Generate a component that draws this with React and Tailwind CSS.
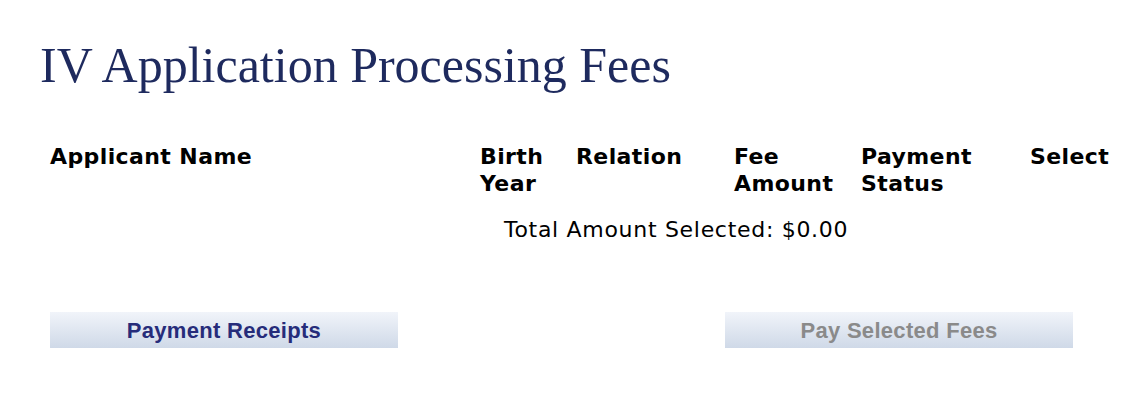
import React from 'react';

const COLUMNS = [
  { label: ['Applicant Name'], width: 'w-[430px]' },
  { label: ['Birth', 'Year'], width: 'w-[96px]' },
  { label: ['Relation'], width: 'w-[158px]' },
  { label: ['Fee', 'Amount'], width: 'w-[127px]' },
  { label: ['Payment', 'Status'], width: 'w-[169px]' },
  { label: ['Select'], width: 'w-[80px]' },
];

function Button({ children, disabled }) {
  return (
    <button
      disabled={disabled}
      className={
        'w-[348px] h-[36px] bg-gradient-to-b from-[#f1f4fa] to-[#cfd9e8] font-["Liberation_Sans",Arial,sans-serif] font-bold text-[22px] tracking-[0.3px] ' +
        (disabled ? 'text-[#8a8a8a]' : 'text-[#262c7a]')
      }
    >
      {children}
    </button>
  );
}

export default function App() {
  return (
    <div className="w-[1141px] h-[400px] bg-white">
      <h1 className="pl-[40px] pt-[35px] font-['Liberation_Serif','Times_New_Roman',serif] text-[50px] leading-[60px] text-[#1e2a5e]">
        IV Application Processing Fees
      </h1>

      {/* Fee table header */}
      <div className="mt-[48px] pl-[50px] flex font-['DejaVu_Sans',Verdana,sans-serif] font-bold text-[22px] leading-[27px] tracking-[0.4px] text-black">
        {COLUMNS.map((col) => (
          <div key={col.label.join(' ')} className={col.width}>
            {col.label.map((line) => (
              <div key={line}>{line}</div>
            ))}
          </div>
        ))}
      </div>

      <div className="mt-[19px] pl-[504px] font-['DejaVu_Sans',Verdana,sans-serif] text-[22px] leading-[27px] tracking-[0.7px] text-black">
        Total Amount Selected: $0.00
      </div>

      <div className="mt-[69px] pl-[50px] flex gap-[327px]">
        <Button>Payment Receipts</Button>
        <Button disabled>Pay Selected Fees</Button>
      </div>
    </div>
  );
}
